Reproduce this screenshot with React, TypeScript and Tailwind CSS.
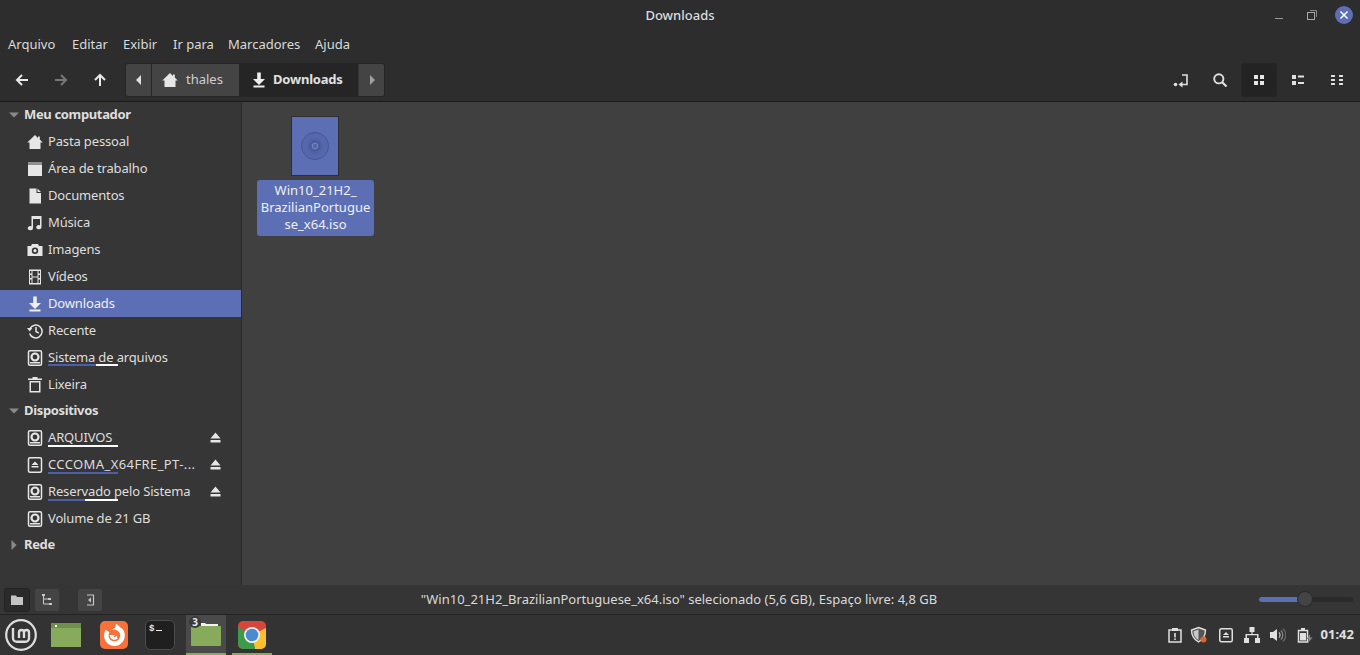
import React from "react";

const Home = ({ c = "#e6e6e6" }: { c?: string }) => (
  <svg width="16" height="16" viewBox="0 0 16 16"><path fill={c} d="M8 1 0.3 8.5H2.5V15H13.5V8.5H15.7L12.8 5.6V2.5H11V3.9Z" /></svg>
);
const Down = ({ c = "#eeeeee" }: { c?: string }) => (
  <svg width="16" height="16" viewBox="0 0 16 16"><path fill={c} d="M6.2 0.5H9.8V7H14L8 13 2 7H6.2ZM2.5 13.5H13.5V15.5H2.5Z" /></svg>
);
const Drive = () => (
  <svg width="16" height="16" viewBox="0 0 16 16">
    <rect x="1.5" y="0.75" width="13" height="14.5" rx="1.5" fill="none" stroke="#e6e6e6" strokeWidth="1.5" />
    <circle cx="8" cy="7" r="3.5" fill="none" stroke="#e6e6e6" strokeWidth="2.2" />
    <rect x="3" y="12" width="10" height="1.5" fill="#e6e6e6" />
  </svg>
);
const Media = () => (
  <svg width="16" height="16" viewBox="0 0 16 16">
    <rect x="1.5" y="0.75" width="13" height="14.5" rx="1.5" fill="none" stroke="#e6e6e6" strokeWidth="1.5" />
    <path fill="#e6e6e6" d="M8 4.5 11.5 8H4.5ZM4.5 9H11.5V10.5H4.5Z" />
  </svg>
);
const Eject = () => (
  <svg width="12" height="12" viewBox="0 0 12 12"><path fill="#e6e6e6" d="M5.5 0.5 10.5 6.5H0.5ZM0.5 8H10.5V10.5H0.5Z" /></svg>
);
const Icons: Record<string, React.ReactNode> = {
  home: <Home />,
  desktop: (
    <svg width="16" height="16" viewBox="0 0 16 16"><path fill="#e6e6e6" d="M1 1.5H15V2.6H1ZM1 3.6H15V15H1Z" /></svg>
  ),
  doc: (
    <svg width="16" height="16" viewBox="0 0 16 16"><path fill="#e6e6e6" d="M2.5 0.5H9.5V5H14V15.5H2.5ZM10.5 0.5 14 4H10.5Z" /></svg>
  ),
  music: (
    <svg width="16" height="16" viewBox="0 0 16 16"><path fill="#e6e6e6" d="M4.5 1H14.5V12A2.6 2.1 0 1 1 13 10.2V4H6V13A2.6 2.1 0 1 1 4.5 11.2Z" /></svg>
  ),
  camera: (
    <svg width="16" height="16" viewBox="0 0 16 16"><path fill="#e6e6e6" fillRule="evenodd" d="M5 2H11L12 4H15.5V14H0.5V4H4ZM8 5.5A3.2 3.2 0 1 0 8 11.9 3.2 3.2 0 1 0 8 5.5Z" /><circle cx="8" cy="8.7" r="1.6" fill="#e6e6e6" /></svg>
  ),
  film: (
    <svg width="16" height="16" viewBox="0 0 16 16"><path fill="#e6e6e6" fillRule="evenodd" d="M2 0.5H14V15.5H2ZM3 2V4.5H4.5V2ZM3 6V9H4.5V6ZM3 10.5V14H4.5V10.5ZM11.5 2V4.5H13V2ZM11.5 6V9H13V6ZM11.5 10.5V14H13V10.5ZM5.5 2V7.5H10.5V2ZM5.5 8.5V14H10.5V8.5Z" /></svg>
  ),
  down: <Down />,
  recent: (
    <svg width="16" height="16" viewBox="0 0 16 16"><path fill="none" stroke="#e6e6e6" strokeWidth="1.5" d="M3 5.5A6.4 6.4 0 1 1 2.6 10.5M9 4V8.5L11.8 10.2" /><path fill="#e6e6e6" d="M0 5H5.4L2.7 8.6Z" /></svg>
  ),
  drive: <Drive />,
  media: <Media />,
  trash: (
    <svg width="16" height="16" viewBox="0 0 16 16"><path fill="#e6e6e6" fillRule="evenodd" d="M5.5 0H10.5V1.5H15V3H1V1.5H5.5ZM2.5 4H13.5V15.5H2.5ZM4 5.5V14H12V5.5Z" /></svg>
  ),
};

type Row = { icon: string; label: string; active?: boolean; eject?: boolean; bar?: [number, number]; barTop?: string; wide?: boolean };
const places: Row[] = [
  { icon: "home", label: "Pasta pessoal" },
  { icon: "desktop", label: "Área de trabalho" },
  { icon: "doc", label: "Documentos" },
  { icon: "music", label: "Música" },
  { icon: "camera", label: "Imagens" },
  { icon: "film", label: "Vídeos" },
  { icon: "down", label: "Downloads", active: true },
  { icon: "recent", label: "Recente" },
  { icon: "drive", label: "Sistema de arquivos", bar: [48, 22], barTop: "top-[20px]" },
  { icon: "trash", label: "Lixeira" },
];
const devices: Row[] = [
  { icon: "drive", label: "ARQUIVOS", eject: true, bar: [0, 70], barTop: "top-[21px]" },
  { icon: "media", label: "CCCOMA_X64FRE_PT-...", eject: true, bar: [70, 0], barTop: "top-[21px]", wide: true },
  { icon: "drive", label: "Reservado pelo Sistema", eject: true, bar: [37, 33], barTop: "top-[21px]" },
  { icon: "drive", label: "Volume de 21 GB" },
];

function SideRow({ r }: { r: Row }) {
  return (
    <div className={`relative flex h-[27px] items-center pl-[27px] pr-[19px] ${r.active ? "bg-[#5c6fb5] text-[#f0f0f0]" : "text-[#dedede]"}`}>
      <div className="mr-[5px] flex w-4 justify-center">{Icons[r.icon]}</div>
      <span className={`flex-1 whitespace-nowrap ${r.wide ? "tracking-[0.4px]" : "tracking-[-0.15px]"}`}>{r.label}</span>
      {r.eject && <div className="flex w-[12px] justify-center"><Eject /></div>}
      {r.bar && (
        <div className={`absolute left-[48px] flex h-[2px] ${r.barTop}`}>
          <div className="bg-[#4a5fa8]" style={{ width: r.bar[0] }} />
          <div className="bg-white" style={{ width: r.bar[1] }} />
        </div>
      )}
    </div>
  );
}

const Tri = ({ open }: { open: boolean }) => (
  <svg width="10" height="10" viewBox="0 0 10 10" className="mr-[5px]">
    <path fill="#8a8a8a" d={open ? "M0 2.5H10L5 7.5Z" : "M2.5 0V10L7.5 5Z"} />
  </svg>
);
function Header({ label, open = true }: { label: string; open?: boolean }) {
  return (
    <div className="flex h-[26px] items-center pl-[9px] font-bold tracking-[-0.35px] text-[#dedede]">
      <Tri open={open} />
      {label}
    </div>
  );
}

const ToolBtn = ({ children, active }: { children: React.ReactNode; active?: boolean }) => (
  <div className={`flex h-[34px] w-[36px] items-center justify-center rounded-[3px] ${active ? "border border-[#262626] bg-[#232323]" : ""}`}>{children}</div>
);
const StatusBtn = ({ children, active }: { children: React.ReactNode; active?: boolean }) => (
  <div className={`flex h-[24px] w-[26px] items-center justify-center rounded-[3px] border ${active ? "border-[#232323] bg-[#2a2a2a]" : "border-[#363636] bg-[#444444]"}`}>{children}</div>
);

const menu: [string, string][] = [
  ["Arquivo", "w-[64px]"],
  ["Editar", "w-[51px]"],
  ["Exibir", "w-[50px]"],
  ["Ir para", "w-[55px]"],
  ["Marcadores", "w-[87px]"],
  ["Ajuda", "w-[40px]"],
];

export default function App() {
  return (
    <div className="flex h-[655px] w-[1360px] flex-col overflow-hidden bg-[#2d2d2d] text-[13px] text-[#dadada]" style={{ fontFamily: '"Noto Sans", sans-serif' }}>
      {/* title bar */}
      <div className="relative flex h-[32px] shrink-0 items-center justify-center font-medium text-[#dcdcdc]">
        Downloads
        <div className="absolute right-[7px] top-[6px] flex items-center">
          <svg width="16" height="16" viewBox="0 0 16 16" className="mr-[15px]"><rect x="2" y="11" width="8" height="1" fill="#9a9a9a" /></svg>
          <svg width="16" height="16" viewBox="0 0 16 16" className="mr-[15px]"><rect x="3.5" y="5.5" width="7" height="7" fill="none" stroke="#a8a8a8" /><path fill="none" stroke="#8a8a8a" d="M6 3.5H12.5V10" /></svg>
          <div className="flex h-[18px] w-[18px] items-center justify-center rounded-full bg-[#5c6fb5]">
            <svg width="10" height="10" viewBox="0 0 10 10"><path stroke="#fff" strokeWidth="1.5" d="M1.5 1.5 8.5 8.5M8.5 1.5 1.5 8.5" /></svg>
          </div>
        </div>
      </div>
      {/* menu bar */}
      <div className="flex h-[26px] shrink-0 items-center pl-[8px] text-[#dadada]">
        {menu.map(([m, w]) => (
          <span key={m} className={`whitespace-nowrap ${w}`}>{m}</span>
        ))}
      </div>
      {/* toolbar */}
      <div className="flex h-[44px] shrink-0 items-center border-b-[1px] border-[#1a1a1a]">
        <div className="flex w-[125px] items-center pl-[14px]">
          <svg width="16" height="16" viewBox="0 0 16 16" className="mr-[23px]"><path fill="none" stroke="#e8e8e8" strokeWidth="2" d="M14 8H3M8 3 3 8 8 13" /></svg>
          <svg width="16" height="16" viewBox="0 0 16 16" className="mr-[23px]"><path fill="none" stroke="#777" strokeWidth="2" d="M2 8H13M8 3 13 8 8 13" /></svg>
          <svg width="16" height="16" viewBox="0 0 16 16"><path fill="none" stroke="#e8e8e8" strokeWidth="2" d="M8 14V3M3 8 8 3 13 8" /></svg>
        </div>
        <div className="flex h-[34px] items-stretch overflow-hidden rounded-[3px] border border-[#262626]">
          <div className="flex w-[26px] items-center justify-center border-r border-[#262626] bg-[#444444]">
            <svg width="8" height="10" viewBox="0 0 8 10"><path fill="#e0e0e0" d="M6 0V10L1 5Z" /></svg>
          </div>
          <div className="flex w-[87px] items-center bg-[#444444] pl-[10px] text-[#cfcfcf]">
            <Home />
            <span className="ml-[8px]">thales</span>
          </div>
          <div className="flex w-[119px] items-center bg-[#252525] pl-[12px] font-bold tracking-[-0.2px] text-[#e0e0e0]">
            <Down />
            <span className="ml-[6px]">Downloads</span>
          </div>
          <div className="flex w-[26px] items-center justify-center border-l border-[#363636] bg-[#444444]">
            <svg width="8" height="10" viewBox="0 0 8 10"><path fill="#a0a0a0" d="M2 0V10L7 5Z" /></svg>
          </div>
        </div>
        <div className="ml-auto mr-[5px] flex items-center gap-[3px]">
          <ToolBtn>
            <svg width="16" height="16" viewBox="0 0 16 16"><circle cx="2.5" cy="12.5" r="1.8" fill="#e0e0e0" /><path fill="none" stroke="#e0e0e0" strokeWidth="1.6" d="M9 3H14V12.5H7" /><path fill="#e0e0e0" d="M9.5 9.5V15.5L5.5 12.5Z" /></svg>
          </ToolBtn>
          <ToolBtn>
            <svg width="16" height="16" viewBox="0 0 16 16"><circle cx="6.8" cy="6.8" r="4.6" fill="none" stroke="#e0e0e0" strokeWidth="1.9" /><path stroke="#e0e0e0" strokeWidth="2.2" d="M10.2 10.2 14.5 14.5" /></svg>
          </ToolBtn>
          <ToolBtn active>
            <svg width="12" height="12" viewBox="0 0 12 12"><path fill="#e6e6e6" d="M1 1H5V5H1ZM7 1H11V5H7ZM1 7H5V11H1ZM7 7H11V11H7Z" /></svg>
          </ToolBtn>
          <ToolBtn>
            <svg width="12" height="12" viewBox="0 0 12 12"><path fill="#e0e0e0" d="M0 1H4V5H0ZM0 7H4V11H0ZM6 1.5H12V3.5H6ZM6 8H12V10H6Z" /></svg>
          </ToolBtn>
          <ToolBtn>
            <svg width="12" height="12" viewBox="0 0 12 12"><path fill="#e0e0e0" d="M0 1H4V3H0ZM0 5H4V7H0ZM0 9H4V11H0ZM8 1H12V3H8ZM8 5H12V7H8ZM8 9H12V11H8Z" /></svg>
          </ToolBtn>
        </div>
      </div>
      {/* body */}
      <div className="flex h-[483px] shrink-0">
        <aside className="w-[242px] shrink-0 border-r border-[#2a2a2a] bg-[#363636]">
          <Header label="Meu computador" />
          {places.map((r) => <SideRow key={r.label} r={r} />)}
          <Header label="Dispositivos" />
          {devices.map((r) => <SideRow key={r.label} r={r} />)}
          <Header label="Rede" open={false} />
        </aside>
        <main className="flex-1 bg-[#404040] pl-[15px] pt-[14px]">
          <div className="flex w-[117px] flex-col items-center">
            <div className="mr-[1px] flex h-[60px] w-[48px] items-center justify-center border border-[#2f2f2f] bg-[#5c6fb5]">
              <svg width="30" height="30" viewBox="0 0 30 30">
                <circle cx="15" cy="15" r="13.5" fill="#5668ad" stroke="#475791" />
                <circle cx="15" cy="15" r="8" fill="#5262a6" />
                <circle cx="15" cy="15" r="4.8" fill="none" stroke="#475791" strokeWidth="1.2" />
                <circle cx="15" cy="15" r="2.6" fill="none" stroke="#7787c4" />
              </svg>
            </div>
            <div className="mt-[4px] h-[56px] w-[117px] rounded-[3px] bg-[#5c6fb5] px-[2px] pt-[2px] text-center leading-[17px] text-[#f0f0f0]">
              Win10_21H2_<br />BrazilianPortugue<br />se_x64.iso
            </div>
          </div>
        </main>
      </div>
      {/* status bar */}
      <div className="relative flex h-[29px] shrink-0 items-center bg-[#353535] pl-[4px] pr-[7px]">
        <div className="flex items-center gap-[4px]">
          <StatusBtn active>
            <svg width="14" height="14" viewBox="0 0 14 14"><path fill="#c4c4c4" d="M1 2.5H6L7 4H13V12H1Z" /></svg>
          </StatusBtn>
          <StatusBtn>
            <svg width="14" height="14" viewBox="0 0 14 14"><path fill="none" stroke="#c8c8c8" d="M3.5 1V11H12M3.5 6H8" /><path fill="#c8c8c8" d="M2 1H5V3H2ZM8 5H11V7H8ZM9 10H12V12H9Z" /></svg>
          </StatusBtn>
          <div className="ml-[13px]">
            <StatusBtn>
              <svg width="14" height="14" viewBox="0 0 14 14"><path fill="none" stroke="#c8c8c8" strokeWidth="1.2" d="M4 2H10.5V12H4" /><path fill="#c8c8c8" d="M8 4.5V9.5L5 7Z" /></svg>
            </StatusBtn>
          </div>
        </div>
        <span className="absolute left-0 right-[2px] text-center text-[#dadada]">"Win10_21H2_BrazilianPortuguese_x64.iso" selecionado (5,6 GB), Espaço livre: 4,8 GB</span>
        <div className="relative ml-auto h-[5px] w-[94px] rounded-full bg-[#2a2a2a]">
          <div className="h-[5px] w-[40px] rounded-l-full bg-[#5c6fb5]" />
          <div className="absolute left-[38px] top-[-6px] h-[16px] w-[16px] rounded-full border border-[#2a2a2a] bg-[#444444]" />
        </div>
      </div>
      {/* panel */}
      <div className="flex h-[41px] shrink-0 items-center border-t border-[#232323] bg-[#333333]">
        <div className="ml-[5px] mr-[9px]">
          <svg width="32" height="32" viewBox="0 0 32 32">
            <circle cx="16" cy="16" r="14.8" fill="none" stroke="#dedede" strokeWidth="2.2" />
            <path fill="none" stroke="#dedede" strokeWidth="2.4" d="M8 9V19A3.8 3.8 0 0 0 11.8 22.8H20.5A3.5 3.5 0 0 0 24 19.3V13.5A2.5 2.5 0 0 0 19 13.5V19M14 19V13.5A2.5 2.5 0 0 1 19 13.5" />
          </svg>
        </div>
        <div className="flex w-[40px] justify-center">
          <svg width="30" height="24" viewBox="0 0 30 24"><rect width="30" height="24" fill="#87ab5b" /><rect width="30" height="5" fill="#6f8f4a" /><rect x="4" y="2" width="2" height="2" fill="#fff" /></svg>
        </div>
        <div className="ml-[8px] flex w-[40px] justify-center">
          <svg width="28" height="28" viewBox="0 0 28 28">
            <rect width="28" height="28" rx="5" fill="#f8703a" />
            <path fill="none" stroke="#fff" strokeWidth="4.6" d="M7.5 10A8.2 8.2 0 1 0 20 8.5" />
            <path fill="#fff" d="M16 3 C20 5 23 9 23 13L18 10C16 8.5 14 8 11 9L15 7Z" />
            <path fill="#fff" d="M9.5 14H15L13 16.5 17 15 17.5 17.5 C15 20 10.5 19 9.5 14Z" />
          </svg>
        </div>
        <div className="ml-[6px] flex w-[40px] justify-center">
          <svg width="30" height="30" viewBox="0 0 30 30"><rect x="0.5" y="0.5" width="29" height="29" rx="5" fill="#1f1f1f" stroke="#4d4d4d" /><text x="4" y="11" fontSize="9" fontWeight="700" fill="#e8e8e8" fontFamily="Liberation Mono">$</text><rect x="11" y="10" width="6" height="1" fill="#e8e8e8" /></svg>
        </div>
        <div className="relative ml-[6px] flex h-[40px] w-[40px] items-center justify-center self-start bg-[#4a4a4a]">
          <svg width="30" height="24" viewBox="0 0 30 24" className="mt-[-1px]">
            <path fill="#f2f2f2" d="M10 0H14L15 1H27V3H10Z" />
            <rect y="3" width="30" height="20" rx="1" fill="#87ab5b" />
          </svg>
          <div className="absolute left-[3px] top-[1px] flex h-[12px] w-[12px] items-center justify-center rounded-full bg-[#3a3a3a] text-[10px] font-bold leading-[12px] text-[#e8e8e8]">3</div>
          <div className="absolute inset-x-0 bottom-0 h-[2px] bg-[#87ab5b]" />
        </div>
        <div className="relative ml-[6px] flex h-[40px] w-[40px] items-center justify-center self-start">
          <svg width="28" height="28" viewBox="0 0 28 28">
            <clipPath id="tile"><rect width="28" height="28" rx="5" /></clipPath>
            <g clipPath="url(#tile)">
              <rect width="28" height="28" fill="#d8453a" />
              <path fill="#fbc02d" d="M14 14 28 7V28H17Z" />
              <path fill="#3c9a4a" d="M14 14 0 6V28H17Z" />
            </g>
            <circle cx="14" cy="14" r="8" fill="#f4f4f4" />
            <circle cx="14" cy="14" r="6.3" fill="#4a8ad0" />
          </svg>
          <div className="absolute inset-x-0 bottom-0 h-[2px] bg-[#87ab5b]" />
        </div>
        <div className="ml-auto flex items-center pr-[6px]">
          <svg width="16" height="16" viewBox="0 0 16 16"><path fill="none" stroke="#e0e0e0" strokeWidth="1.5" d="M5 3H2V15H14V3H11" /><path fill="#e0e0e0" d="M5 1H11V4H5ZM7.2 6H8.8V10.5H7.2ZM7.2 11.5H8.8V13H7.2Z" /></svg>
          <svg width="18" height="18" viewBox="0 0 18 18" className="ml-[7px]"><path fill="#555" stroke="#e0e0e0" strokeWidth="1.4" d="M8.5 1.5 15.5 4C15.5 10 13 13.5 8.5 16 4 13.5 1.5 10 1.5 4Z" /><path fill="#c8c8c8" d="M8.5 3.5V14C5 12 3.5 9.5 3.5 5.2Z" /><circle cx="13.5" cy="13.5" r="3" fill="#e0632d" /></svg>
          <svg width="16" height="16" viewBox="0 0 16 16" className="ml-[10px]"><rect x="1.75" y="1.75" width="12.5" height="13" rx="1.5" fill="none" stroke="#e0e0e0" strokeWidth="1.5" /><path fill="#e0e0e0" d="M8 5 11 8H5ZM5 9H11V10.5H5Z" /></svg>
          <svg width="16" height="16" viewBox="0 0 16 16" className="ml-[10px]"><path fill="#e0e0e0" d="M5.5 0H10.5V5H8.6V7H14.5V11H16V16H11V11H13V8.2H3V11H5V16H0V11H1.5V7H7.4V5H5.5Z" /></svg>
          <svg width="16" height="16" viewBox="0 0 16 16" className="ml-[10px]"><path fill="#e0e0e0" d="M0 5H3L7 2V14L3 11H0Z" /><path fill="none" stroke="#c0c0c0" strokeWidth="1.2" d="M9 5.5A3.5 3.5 0 0 1 9 10.5" /><path fill="none" stroke="#8a8a8a" strokeWidth="1.2" d="M11 3.5A6.5 6.5 0 0 1 11 12.5" /><path fill="none" stroke="#666" strokeWidth="1.2" d="M13 1.5A9 9 0 0 1 13 14.5" /></svg>
          <svg width="16" height="16" viewBox="0 0 16 16" className="ml-[11px]"><path fill="none" stroke="#e0e0e0" strokeWidth="1.5" d="M1.5 3.5H10.5V15H1.5Z" /><rect x="4" y="1" width="4" height="2" fill="#e0e0e0" /><path fill="#e0e0e0" d="M3 6H9V13.5H3Z" /><path fill="#8a8a8a" d="M13 7 9.5 12H12L11 16 15.5 10.5H13Z" /></svg>
          <span className="ml-[8px] font-bold text-[#e0e0e0]">01:42</span>
        </div>
      </div>
    </div>
  );
}
